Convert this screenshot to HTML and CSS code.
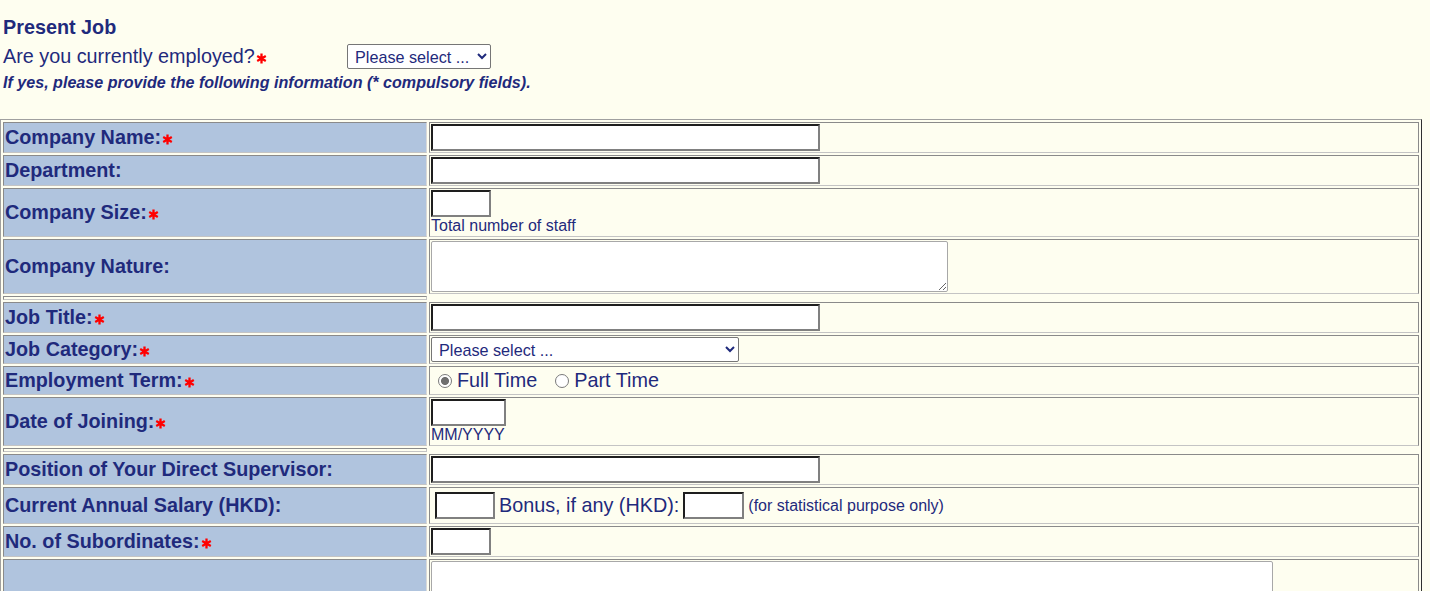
FILE: index.html
```html
<!DOCTYPE html>
<html lang="en">
<head>
<meta charset="utf-8">
<title>Present Job</title>
<link rel="stylesheet" href="styles.css">
</head>
<body>
<div class="page">
  <div class="title">Present Job</div>
  <div class="question">
    <span class="q">Are you currently employed?<svg class="req" viewBox="0 0 12 12"><path d="M6 0.6V11.4M1.3 3.3L10.7 8.7M1.3 8.7L10.7 3.3"/></svg></span>
    <select class="sel sel-top"><option>Please select ...</option></select>
  </div>
  <div class="note">If yes, please provide the following information (* compulsory fields).</div>

  <table class="form">
    <tr>
      <td class="lbl">Company Name:<svg class="req" viewBox="0 0 12 12"><path d="M6 0.6V11.4M1.3 3.3L10.7 8.7M1.3 8.7L10.7 3.3"/></svg></td>
      <td class="fld"><input class="txt w-long" type="text"></td>
    </tr>
    <tr>
      <td class="lbl">Department:</td>
      <td class="fld"><input class="txt w-long" type="text"></td>
    </tr>
    <tr>
      <td class="lbl">Company Size:<svg class="req" viewBox="0 0 12 12"><path d="M6 0.6V11.4M1.3 3.3L10.7 8.7M1.3 8.7L10.7 3.3"/></svg></td>
      <td class="fld"><input class="txt w-small" type="text"><div class="hint">Total number of staff</div></td>
    </tr>
    <tr>
      <td class="lbl">Company Nature:</td>
      <td class="fld"><textarea class="area area-nature"></textarea></td>
    </tr>
    <tr class="sep">
      <td class="sep-cell"></td>
      <td class="sep-empty"></td>
    </tr>
    <tr>
      <td class="lbl">Job Title:<svg class="req" viewBox="0 0 12 12"><path d="M6 0.6V11.4M1.3 3.3L10.7 8.7M1.3 8.7L10.7 3.3"/></svg></td>
      <td class="fld"><input class="txt w-long" type="text"></td>
    </tr>
    <tr>
      <td class="lbl">Job Category:<svg class="req" viewBox="0 0 12 12"><path d="M6 0.6V11.4M1.3 3.3L10.7 8.7M1.3 8.7L10.7 3.3"/></svg></td>
      <td class="fld"><select class="sel sel-cat"><option>Please select ...</option></select></td>
    </tr>
    <tr>
      <td class="lbl">Employment Term:<svg class="req" viewBox="0 0 12 12"><path d="M6 0.6V11.4M1.3 3.3L10.7 8.7M1.3 8.7L10.7 3.3"/></svg></td>
      <td class="fld">
        <div class="radios">
          <label class="opt"><input class="radio" type="radio" name="term" checked>Full Time</label>
          <label class="opt"><input class="radio" type="radio" name="term">Part Time</label>
        </div>
      </td>
    </tr>
    <tr>
      <td class="lbl">Date of Joining:<svg class="req" viewBox="0 0 12 12"><path d="M6 0.6V11.4M1.3 3.3L10.7 8.7M1.3 8.7L10.7 3.3"/></svg></td>
      <td class="fld"><input class="txt w-date" type="text"><div class="hint">MM/YYYY</div></td>
    </tr>
    <tr class="sep">
      <td class="sep-cell"></td>
      <td class="sep-empty"></td>
    </tr>
    <tr>
      <td class="lbl">Position of Your Direct Supervisor:</td>
      <td class="fld"><input class="txt w-long" type="text"></td>
    </tr>
    <tr>
      <td class="lbl">Current Annual Salary (HKD):</td>
      <td class="fld">
        <div class="salary">
          <input class="txt w-small" type="text">
          <span class="bonus">Bonus, if any (HKD):</span>
          <input class="txt w-small2" type="text">
          <span class="small">(for statistical purpose only)</span>
        </div>
      </td>
    </tr>
    <tr>
      <td class="lbl">No. of Subordinates:<svg class="req" viewBox="0 0 12 12"><path d="M6 0.6V11.4M1.3 3.3L10.7 8.7M1.3 8.7L10.7 3.3"/></svg></td>
      <td class="fld"><input class="txt w-small" type="text"></td>
    </tr>
    <tr>
      <td class="lbl"></td>
      <td class="fld"><textarea class="area area-last"></textarea></td>
    </tr>
  </table>
</div>
</body>
</html>
```

FILE: styles.css
```css
html, body {
  margin: 0;
  padding: 0;
  background: #fefef0;
}

body {
  font-family: "Liberation Sans", Arial, sans-serif;
  color: #1f2a7c;
}

.page {
  padding-top: 16px;
}

.title {
  font-weight: bold;
  font-size: 19.8px;
  line-height: 23px;
  margin-left: 3px;
}

.question {
  display: flex;
  align-items: center;
  height: 25px;
  margin: 5px 0 0 3px;
  font-size: 19.8px;
}

.question .q {
  width: 344px;
}

.note {
  font-style: italic;
  font-weight: bold;
  font-size: 16.1px;
  line-height: 18px;
  margin: 4px 0 0 3px;
}

.req {
  width: 11px;
  height: 11px;
  margin-left: 1px;
  vertical-align: -1px;
}

.req path {
  stroke: #ff0000;
  stroke-width: 2.5;
  fill: none;
}

.form {
  margin-top: 28px;
  width: 1422px;
  border-collapse: separate;
  border-spacing: 2px;
  border: 1px solid;
  border-color: #a0a0a0 #303030 #303030 #a0a0a0;
}

.form td {
  border: 1px solid;
  border-color: #8a8a8a #c4c4c4 #c4c4c4 #8a8a8a;
  padding: 1px;
}

.form td.lbl {
  width: 424px;
  box-sizing: border-box;
  background: #b0c4de;
  font-weight: bold;
  font-size: 19.8px;
  vertical-align: middle;
  border-right-color: #d8d8d8;
}

.form td.fld {
  vertical-align: middle;
  border-right-color: #8a8a8a;
}

.form td.sep-cell {
  height: 2px;
  padding: 0;
  box-sizing: content-box;
  border-color: #8a8a8a #c4c4c4 #c4c4c4 #8a8a8a;
}

.form td.sep-empty {
  border: none;
  padding: 0;
}

.txt {
  display: block;
  box-sizing: border-box;
  height: 27px;
  margin: 0;
  padding: 0 2px;
  border: 2px solid;
  border-color: #1e1e1e #808080 #808080 #1e1e1e;
  background: #fff;
  font: 16px "Liberation Sans", Arial, sans-serif;
}

.w-long { width: 389px; }
.w-small { width: 60px; }
.w-small2 { width: 61px; }
.w-date { width: 75px; }

.hint {
  font-size: 16px;
  line-height: 18px;
}

.area {
  display: block;
  box-sizing: border-box;
  margin: 0;
  border: 1px solid #a8a8a8;
  border-radius: 2px;
  background: #fff;
  font: 16px "Liberation Sans", Arial, sans-serif;
}

.area-nature {
  width: 517px;
  height: 51px;
}

.area-last {
  width: 842px;
  height: 80px;
}

.sel {
  box-sizing: border-box;
  height: 25px;
  margin: 0;
  padding: 0 0 0 3px;
  border: 1px solid #767676;
  border-radius: 2px;
  background: #fff;
  color: #1f2a7c;
  font: 16.2px "Liberation Sans", Arial, sans-serif;
}

.sel-top { width: 144px; }

.sel-cat {
  display: block;
  width: 308px;
}

.radios {
  display: flex;
  align-items: center;
  height: 25px;
  font-size: 19.8px;
}

.opt {
  display: flex;
  align-items: center;
  margin-right: 11px;
}

.radio {
  appearance: none;
  -webkit-appearance: none;
  box-sizing: border-box;
  width: 14px;
  height: 14px;
  margin: 0 5px 0 7px;
  border: 1px solid #7a7a7a;
  border-radius: 50%;
  background: #fff;
}

.radio:checked {
  background: radial-gradient(circle, #6e6e6e 0 3.6px, #fff 4.4px);
}

.salary {
  display: flex;
  align-items: center;
  height: 33px;
  padding-left: 4px;
  font-size: 19.8px;
}

.bonus {
  margin: 0 4px 0 4px;
}

.small {
  font-size: 16px;
  margin-left: 4px;
}
```
